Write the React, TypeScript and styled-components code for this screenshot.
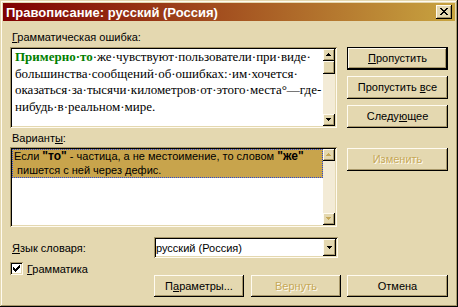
import React from 'react';
import styled, { createGlobalStyle, css } from 'styled-components';

const FACE = '#e4d8b0';
const LIGHT = '#fffbf0';
const SHADOW = '#a8986a';
const DISABLED = '#c6a858';
const TRACK = '#f3ebd6';
const SELECT = '#c8a44c';

const GlobalStyle = createGlobalStyle`
  html, body { margin: 0; padding: 0; }
  body { background: ${FACE}; width: 458px; height: 307px; overflow: hidden; }
  #root { width: 458px; height: 307px; }
`;

const raised = css`
  box-shadow: inset -1px -1px #000, inset 1px 1px ${LIGHT}, inset -2px -2px ${SHADOW};
`;

const sunken = css`
  box-shadow: inset 1px 1px ${SHADOW}, inset -1px -1px ${LIGHT}, inset 2px 2px #000, inset -2px -2px ${FACE};
`;

const Window = styled.div`
  box-sizing: border-box;
  width: 458px;
  height: 307px;
  padding: 3px;
  background: ${FACE};
  box-shadow: inset -1px -1px #000, inset 1px 1px ${FACE}, inset -2px -2px ${SHADOW}, inset 2px 2px ${LIGHT};
  font-family: "Liberation Sans", Arial, sans-serif;
  font-size: 11px;
  color: #000;
  display: flex;
  flex-direction: column;
`;

const TitleBar = styled.div`
  height: 18px;
  flex: none;
  display: flex;
  align-items: center;
  justify-content: space-between;
  padding: 0 3px 0 3px;
  background: linear-gradient(to right, #800000, #c8a440);
`;

const Title = styled.span`
  color: #fff;
  font-weight: bold;
  font-size: 13px;
  white-space: nowrap;
`;

const CloseButton = styled.div`
  width: 16px;
  height: 14px;
  box-sizing: border-box;
  background: ${FACE};
  ${raised};
  display: flex;
  align-items: center;
  justify-content: center;
  padding: 0 1px 1px 0;
`;

const Body = styled.div`
  padding: 9px 7px 0 7px;
  display: grid;
  grid-template-columns: 327px 101px;
  column-gap: 10px;
  align-items: start;
`;

const Label = styled.div<{ $mt?: number }>`
  grid-column: 1;
  height: 14px;
  line-height: 14px;
  white-space: nowrap;
  margin-top: ${p => p.$mt ?? 0}px;
  padding-left: 2px;
`;

const SunkenBox = styled.div<{ $h: number; $mt?: number }>`
  grid-column: 1;
  box-sizing: border-box;
  height: ${p => p.$h}px;
  margin-top: ${p => p.$mt ?? 0}px;
  padding: 2px;
  background: #fff;
  ${sunken};
  display: flex;
`;

const DocText = styled.div`
  flex: 1;
  padding: 0 0 0 3px;
  font-family: "Liberation Serif", "Times New Roman", Times, serif;
  font-size: 13px;
  line-height: 16.5px;
  white-space: pre;
  overflow: hidden;
`;

const Green = styled.b`
  color: #008000;
`;

const ScrollBar = styled.div`
  width: 12px;
  flex: none;
  display: flex;
  flex-direction: column;
  background: ${TRACK};
`;

const ScrollBtn = styled.div<{ $h?: number }>`
  height: ${p => p.$h ?? 12}px;
  flex: none;
  box-sizing: border-box;
  background: ${FACE};
  ${raised};
  display: flex;
  align-items: center;
  justify-content: center;
  padding: 0 1px 1px 0;
`;

const Track = styled.div`
  flex: 1;
`;

const ListArea = styled.div`
  flex: 1;
  background: #fff;
`;

const SelectedItem = styled.div`
  background: ${SELECT};
  border: 1px dotted #2848d8;
  padding: 0 0 0 1px;
  line-height: 13.5px;
  white-space: pre;
`;

const Strong = styled.b`
  font-size: 12px;
`;

const ButtonStack = styled.div<{ $mt?: number }>`
  grid-column: 2;
  display: flex;
  flex-direction: column;
  gap: 6px;
  margin-top: ${p => p.$mt ?? 0}px;
`;

const Button = styled.div<{ $w?: number; $h?: number; $default?: boolean; $disabled?: boolean }>`
  box-sizing: border-box;
  width: ${p => p.$w ?? 101}px;
  height: ${p => p.$h ?? 23}px;
  background: ${FACE};
  display: flex;
  align-items: center;
  justify-content: center;
  white-space: pre;
  padding-bottom: 1px;
  color: ${p => (p.$disabled ? DISABLED : '#000')};
  text-shadow: ${p => (p.$disabled ? `1px 1px ${LIGHT}` : 'none')};
  ${p =>
    p.$default
      ? css`box-shadow: inset 0 0 0 1px #000, inset -2px -2px #000, inset 2px 2px ${LIGHT}, inset -3px -3px ${SHADOW};`
      : raised}
`;

const ButtonLabel = styled.span`
  white-space: pre;
`;

const Bottom = styled.div`
  grid-column: 1 / -1;
  margin-top: 10px;
  display: grid;
  grid-template-columns: 144px 1fr;
  align-items: center;
`;

const Combo = styled.div`
  box-sizing: border-box;
  width: 184px;
  height: 21px;
  padding: 2px;
  background: #fff;
  ${sunken};
  display: flex;
  align-items: stretch;
`;

const ComboText = styled.div`
  flex: 1;
  display: flex;
  align-items: center;
  white-space: nowrap;
`;

const ComboBtn = styled.div`
  width: 13px;
  box-sizing: border-box;
  background: ${FACE};
  ${raised};
  display: flex;
  align-items: center;
  justify-content: center;
  padding: 0 1px 1px 0;
`;

const CheckRow = styled.div`
  grid-column: 1 / -1;
  margin-top: 4px;
  display: flex;
  align-items: center;
  gap: 4px;
  height: 13px;
`;

const CheckBox = styled.div`
  width: 13px;
  height: 13px;
  box-sizing: border-box;
  background: #fff;
  ${sunken};
  display: flex;
  align-items: center;
  justify-content: center;
`;

const BottomButtons = styled.div`
  grid-column: 2;
  display: flex;
  gap: 7px;
  & > :last-child {
    margin-left: -1px;
  }
`;

const Pixels: React.FC<{ rows: string[]; color?: string }> = ({ rows, color = '#000' }) => {
  const w = rows[0].length;
  const h = rows.length;
  const rects: React.ReactElement[] = [];
  rows.forEach((r, y) =>
    r.split('').forEach((c, x) => {
      if (c === '#') rects.push(<rect key={`${x}-${y}`} x={x} y={y} width={1} height={1} fill={color} />);
    })
  );
  return (
    <svg width={w} height={h} viewBox={`0 0 ${w} ${h}`} shapeRendering="crispEdges" style={{ display: 'block' }}>
      {rects}
    </svg>
  );
};

const CLOSE_X = ['##....##', '.##..##.', '..####..', '...##...', '..####..', '.##..##.', '##....##'];
const UP = ['..#..', '.###.', '#####'];
const DOWN = ['#####', '.###.', '..#..'];
const CHECK = ['......#', '.....##', '#...###', '##.###.', '#####..', '.###...', '..#....'];

export default function App() {
  return (
    <>
      <GlobalStyle />
      <Window>
        <TitleBar>
          <Title>Правописание: русский (Россия)</Title>
          <CloseButton>
            <Pixels rows={CLOSE_X} />
          </CloseButton>
        </TitleBar>
        <Body>
          <Label>
            <u>Г</u>рамматическая ошибка:
          </Label>
          <div />
          <SunkenBox $h={81} $mt={3}>
            <DocText>
              <div>
                <Green>Примерно·то</Green>·же·чувствуют·пользователи·при·виде·
              </div>
              <div>большинства·сообщений·об·ошибках:·им·хочется·</div>
              <div>оказаться·за·тысячи·километров·от·этого·места°—где-</div>
              <div>нибудь·в·реальном·мире.</div>
            </DocText>
            <ScrollBar>
              <ScrollBtn>
                <Pixels rows={UP} />
              </ScrollBtn>
              <ScrollBtn $h={13} />
              <Track />
              <ScrollBtn>
                <Pixels rows={DOWN} />
              </ScrollBtn>
            </ScrollBar>
          </SunkenBox>
          <ButtonStack $mt={3}>
            <Button $default>
              <ButtonLabel>
                <u>П</u>ропустить
              </ButtonLabel>
            </Button>
            <Button>
              <ButtonLabel>
                Пропустить <u>в</u>се
              </ButtonLabel>
            </Button>
            <Button>
              <ButtonLabel>
                Следу<u>ю</u>щее
              </ButtonLabel>
            </Button>
          </ButtonStack>
          <Label $mt={3}>
            Вариант<u>ы</u>:
          </Label>
          <div />
          <SunkenBox $h={80} $mt={2}>
            <ListArea>
              <SelectedItem>
                <div>
                  Если <Strong>"то"</Strong> - частица, а не местоимение, то словом <Strong>"же"</Strong>
                </div>
                <div> пишется с ней через дефис.</div>
              </SelectedItem>
            </ListArea>
            <ScrollBar>
              <ScrollBtn>
                <Pixels rows={UP} color={DISABLED} />
              </ScrollBtn>
              <Track />
              <ScrollBtn>
                <Pixels rows={DOWN} color={DISABLED} />
              </ScrollBtn>
            </ScrollBar>
          </SunkenBox>
          <ButtonStack $mt={3}>
            <Button $disabled>
              <ButtonLabel>Изменить</ButtonLabel>
            </Button>
          </ButtonStack>
          <Bottom>
            <Label>
              <u>Я</u>зык словаря:
            </Label>
            <Combo>
              <ComboText>русский (Россия)</ComboText>
              <ComboBtn>
                <Pixels rows={DOWN} />
              </ComboBtn>
            </Combo>
            <CheckRow>
              <CheckBox>
                <Pixels rows={CHECK} />
              </CheckBox>
              <span>
                <u>Г</u>рамматика
              </span>
            </CheckRow>
            <BottomButtons>
              <Button $w={90} $h={22}>
                <ButtonLabel>
                  П<u>а</u>раметры...
                </ButtonLabel>
              </Button>
              <Button $w={90} $h={22} $disabled>
                <ButtonLabel>Вернуть</ButtonLabel>
              </Button>
              <Button $w={101} $h={22}>
                <ButtonLabel>Отмена</ButtonLabel>
              </Button>
            </BottomButtons>
          </Bottom>
        </Body>
      </Window>
    </>
  );
}
